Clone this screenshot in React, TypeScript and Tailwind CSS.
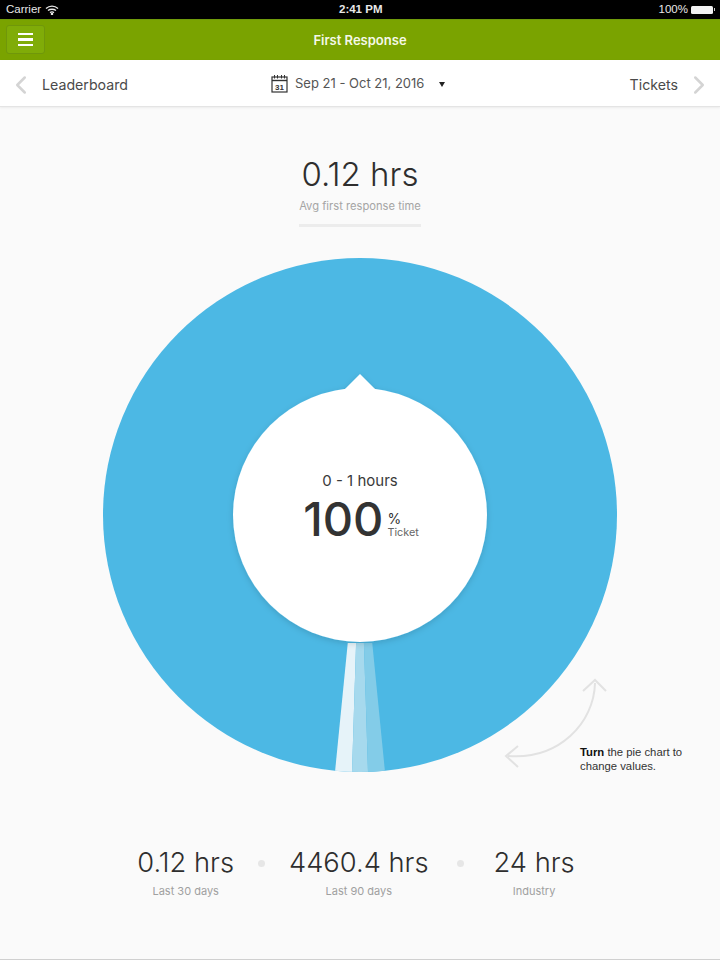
import React from "react";
import { ChevronLeft, ChevronRight } from "lucide-react";

const wedge = (color: string, x1: number, x2: number) => (
  <polygon points={`${x1 * 0.49},${642 - 514} ${x2 * 0.49},${642 - 514} ${x2},257 ${x1},257`} fill={color} />
);

const PieChart = () => (
  <svg width="514" height="514" viewBox="-257 -257 514 514" className="block">
    <defs>
      <clipPath id="pie-clip">
        <circle cx="0" cy="0" r="257" />
      </clipPath>
      <filter id="inner-shadow" x="-20%" y="-20%" width="140%" height="140%">
        <feDropShadow dx="0" dy="2" stdDeviation="3" floodColor="#000000" floodOpacity="0.14" />
      </filter>
    </defs>
    <circle cx="0" cy="0" r="257" fill="#4cb8e4" />
    <g clipPath="url(#pie-clip)">
      {wedge("#e6f3f9", -25, -8)}
      {wedge("#a6d9ed", -8, 8)}
      {wedge("#83cce8", 8, 25)}
    </g>
    <g filter="url(#inner-shadow)">
      <circle cx="0" cy="0" r="127" fill="#ffffff" />
      <polygon points="0,-141 -16,-125 16,-125" fill="#ffffff" />
    </g>
  </svg>
);

const TurnHint = () => (
  <div className="absolute left-[374px] top-[419px] h-[100px] w-[210px]">
    <svg width="104" height="92" viewBox="0 0 104 92" fill="none" stroke="#e2e2e2" strokeWidth="2" className="absolute left-[27px] top-[1px]">
      <path d="M91 5 C90 45 55 82 4 78" />
      <path d="M79 13 L91 2 L102 13" />
      <path d="M14 68 L2 78 L14 89" />
    </svg>
    <p className="absolute left-[103px] top-[68px] w-[122px] text-[11.3px] leading-[14px] text-[#333333] [font-family:'Liberation_Sans',sans-serif]">
      <b className="font-bold text-[#111111]">Turn</b> the pie chart to change values.
    </p>
  </div>
);

const Stat = ({ value, label }: { value: string; label: string }) => (
  <div className="flex flex-col items-center">
    <div className="text-[27.3px] leading-[32px] font-light whitespace-nowrap text-[#2e2e2e]">{value}</div>
    <div className="mt-[5px] text-[11px] leading-[14px] whitespace-nowrap text-[#a0a0a0]">{label}</div>
  </div>
);

export default function App() {
  return (
    <div className="flex h-[960px] w-[720px] flex-col overflow-hidden bg-[#fafafa] [font-family:Inter,sans-serif]">
      {/* status bar */}
      <div className="relative flex h-[19px] items-center justify-between bg-black pl-[6px] pr-[5px] text-[11.5px] text-[#e8e8e8] [font-family:'Liberation_Sans',sans-serif]">
        <div className="flex items-center gap-[4px]">
          <span>Carrier</span>
          <svg width="14" height="10" viewBox="0 0 14 10" fill="none" stroke="#e8e8e8" strokeWidth="1.3">
            <path d="M1 3.5 C4.5 0.3 9.5 0.3 13 3.5" />
            <path d="M3 5.6 C5.2 3.8 8.8 3.8 11 5.6" />
            <path d="M5 7.6 C6.2 6.8 7.8 6.8 9 7.6" />
            <circle cx="7" cy="9" r="0.6" fill="#e8e8e8" />
          </svg>
        </div>
        <span className="absolute left-[339px] font-bold">2:41 PM</span>
        <div className="flex items-center gap-[3px]">
          <span>100%</span>
          <div className="h-[8px] w-[22px] rounded-[1.5px] bg-[#f2f2f2]" />
          <div className="-ml-[2px] h-[3px] w-[1px] bg-[#cccccc]" />
        </div>
      </div>

      {/* green header */}
      <div className="relative flex h-[41px] items-center justify-center border-t border-[#6f9a0a] bg-[#7aa300] pt-[2px]">
        <div className="absolute left-[6px] top-[5px] flex h-[29px] w-[39px] flex-col items-center justify-center gap-[3px] rounded-[3px] border border-[#70970a] bg-[#80ac08]">
          <div className="h-[2.5px] w-[15px] bg-white" />
          <div className="h-[2.5px] w-[15px] bg-white" />
          <div className="h-[2.5px] w-[15px] bg-white" />
        </div>
        <h1 className="text-[13px] font-semibold text-[#f5f8e8]">First Response</h1>
      </div>

      {/* date nav */}
      <div className="relative flex h-[47px] items-center justify-between border-b border-[#e4e4e4] bg-white px-[6px] pt-[3px] shadow-[0_1px_2px_rgba(0,0,0,0.06)]">
        <div className="flex items-center gap-[6px] text-[14.2px] text-[#4a4a4a]">
          <ChevronLeft size={30} strokeWidth={2} color="#d4d4d4" />
          <span>Leaderboard</span>
        </div>
        <div className="absolute left-[271px] top-[14px] flex items-center text-[13px] text-[#555555]">
          <svg width="17" height="19" viewBox="0 0 17 19" fill="none" stroke="#333333">
            <rect x="1" y="3" width="15" height="15" strokeWidth="1.2" />
            <path d="M1 6.5 H16" strokeWidth="1.4" />
            <path d="M3.5 1 V4.5 M6.5 1 V4.5 M10.5 1 V4.5 M13.5 1 V4.5" strokeWidth="1" />
            <text x="8.5" y="15.5" textAnchor="middle" fontSize="8" fontWeight="700" fill="#333333" stroke="none" fontFamily="Liberation Sans">31</text>
          </svg>
          <span className="ml-[7px]">Sep 21 - Oct 21, 2016</span>
          <div className="ml-[15px] mt-[1px] size-0 border-x-[3.5px] border-t-[5px] border-x-transparent border-t-[#222222]" />
        </div>
        <div className="flex items-center gap-[6px] text-[14.2px] text-[#4a4a4a]">
          <span>Tickets</span>
          <ChevronRight size={30} strokeWidth={2} color="#d4d4d4" />
        </div>
      </div>

      {/* main */}
      <main className="relative flex flex-1 flex-col items-center">
        <div className="mt-[49px] flex w-[122px] flex-col items-center border-b-[3px] border-[#ececec] pb-[11px]">
          <div className="text-[33px] leading-[36px] font-light whitespace-nowrap text-[#2e2e2e]">0.12 hrs</div>
          <div className="mt-[7px] text-[11.2px] leading-[14px] whitespace-nowrap text-[#a5a5a5]">Avg first response time</div>
        </div>

        <div className="relative mt-[31px]">
          <PieChart />
          <div className="absolute inset-x-0 top-[214px] flex flex-col items-center">
            <div className="text-[15px] leading-[18px] text-[#3a3a3a]">0 - 1 hours</div>
            <div className="ml-[2px] mt-[4px] flex items-end">
              <span className="text-[47px] leading-[50px] font-medium text-[#333333]">100</span>
              <div className="mb-[5px] ml-[4px] flex flex-col">
                <span className="text-[14px] leading-[15px] text-[#333333]">%</span>
                <span className="text-[10.8px] leading-[13px] text-[#666666]">Ticket</span>
              </div>
            </div>
          </div>
          <TurnHint />
        </div>

        <div className="mt-[75px] flex items-center justify-center pr-[8px]">
          <Stat value="0.12 hrs" label="Last 30 days" />
          <div className="mx-[24px] mb-[19px] size-[7px] rounded-full bg-[#e6e6e6]" />
          <Stat value="4460.4 hrs" label="Last 90 days" />
          <div className="mx-[29px] mb-[19px] size-[7px] rounded-full bg-[#e6e6e6]" />
          <Stat value="24 hrs" label="Industry" />
        </div>
        <div className="absolute inset-x-0 bottom-0 h-px bg-[#d0d0d0]" />
      </main>
    </div>
  );
}
